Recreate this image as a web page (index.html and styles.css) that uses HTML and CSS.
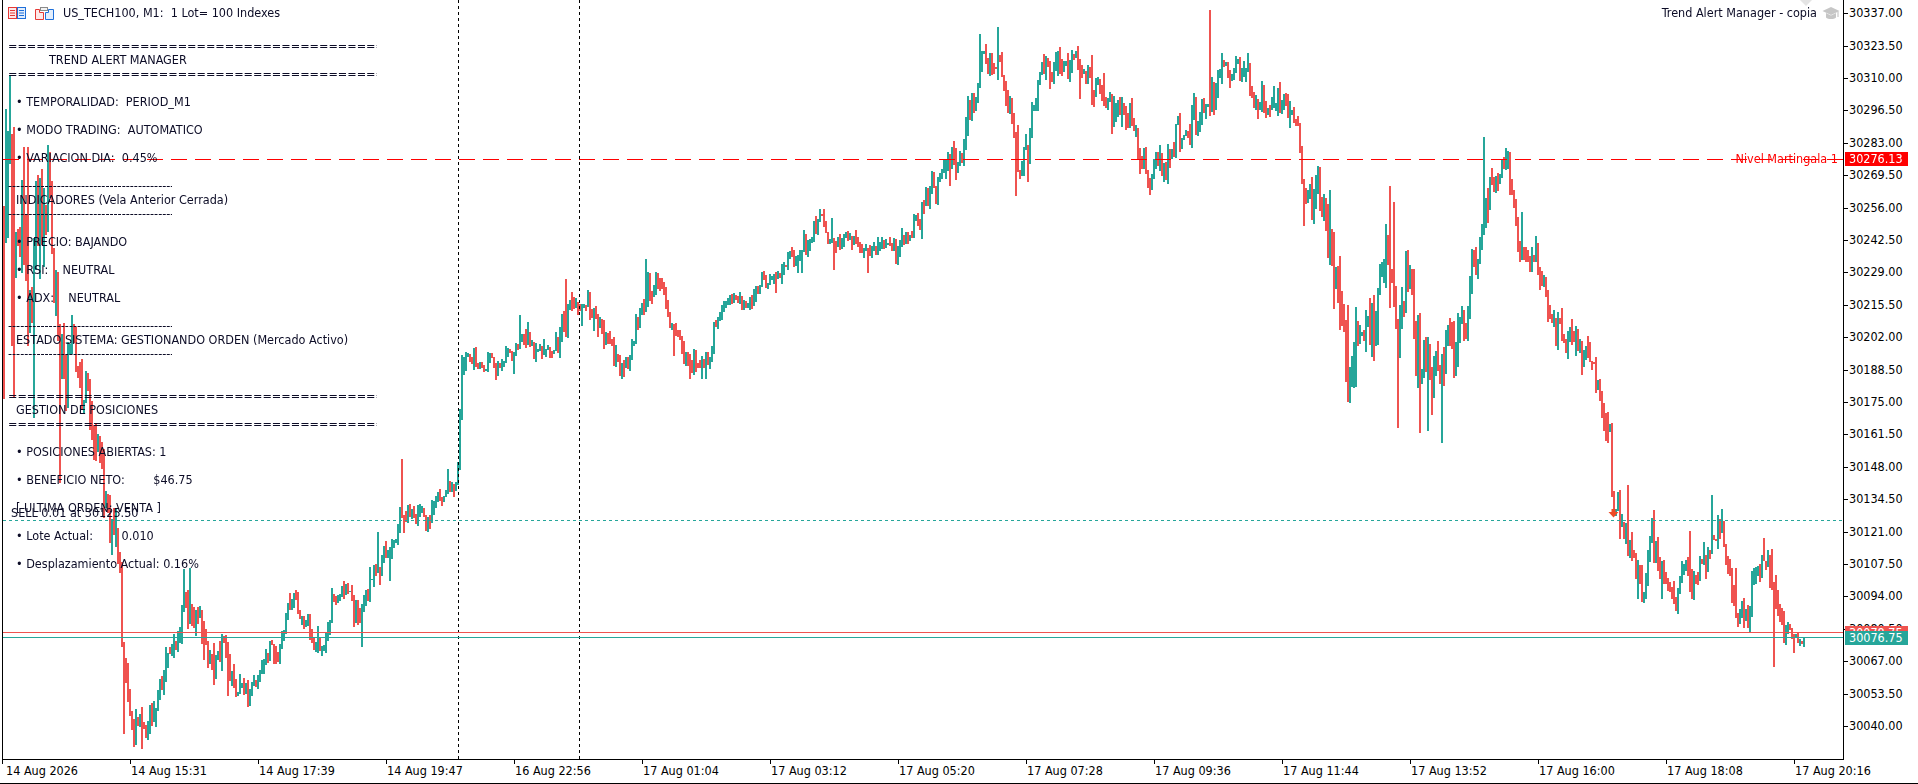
FILE: index.html
```html
<!DOCTYPE html>
<html lang="es">
<head>
<meta charset="utf-8">
<title>US_TECH100, M1</title>
<link rel="stylesheet" href="styles.css">
</head>
<body>
<div class="window">
  <div class="plot">
    <canvas id="chart" class="chart" width="1840" height="759"></canvas>

    <div class="title">
      <svg class="ico" width="18" height="12" viewBox="0 0 18 12">
        <rect x="0.5" y="0.5" width="8" height="11" fill="#fde8e8" stroke="#e53935"/>
        <rect x="9.5" y="0.5" width="8" height="11" fill="#e3eefc" stroke="#1e6fd9"/>
        <path d="M2 3.5h5M2 6h5M2 8.5h5" stroke="#e53935"/>
        <path d="M11 3.5h5M11 6h5M11 8.5h5" stroke="#1e6fd9"/>
      </svg>
      <svg class="ico" width="19" height="13" viewBox="0 0 19 13">
        <path d="M0.5 2.5H4.5V5.5H8.5V12.5H0.5Z" fill="#fde8e8" stroke="#e53935"/>
        <path d="M10.5 5.5H13.5V2.5H18.5V12.5H10.5Z" fill="#e3eefc" stroke="#1e6fd9"/>
        <rect x="5.5" y="0.5" width="7" height="3" fill="#f2f2f2" stroke="#8a8a8a"/>
      </svg>
      <span class="title-text">US_TECH100, M1:  1 Lot= 100 Indexes</span>
    </div>

    <svg class="tri" width="12" height="6" viewBox="0 0 12 6"><path d="M0 0H12L6 6Z" fill="#e4e4e4"/></svg>

    <div class="ea-name">
      <span>Trend Alert Manager - copia</span>
      <svg width="18" height="15" viewBox="0 0 18 15">
        <path d="M9 1L17.5 5L9 9L0.5 5Z" fill="#c6c6c6"/>
        <path d="M4 7V11.5C6 13.5 12 13.5 14 11.5V7L9 9.5Z" fill="#c6c6c6"/>
        <path d="M16 5.5V11" stroke="#c6c6c6" stroke-width="1.2"/>
      </svg>
    </div>

    <div class="panel">
      <div class="row sep-eq">============================================================</div>
      <div class="row title-row">TREND ALERT MANAGER</div>
      <div class="row sep-eq">============================================================</div>
      <div class="row txt item">• TEMPORALIDAD:  PERIOD_M1</div>
      <div class="row txt item">• MODO TRADING:  AUTOMATICO</div>
      <div class="row txt item">• VARIACION DIA:  0.45%</div>
      <div class="row sep-dash item">------------------------------------------------</div>
      <div class="row txt">INDICADORES (Vela Anterior Cerrada)</div>
      <div class="row sep-dash">------------------------------------------------</div>
      <div class="row txt item">• PRECIO: BAJANDO</div>
      <div class="row txt item">• RSI:    NEUTRAL</div>
      <div class="row txt item">• ADX:    NEUTRAL</div>
      <div class="row sep-dash item">------------------------------------------------</div>
      <div class="row txt">ESTADO SISTEMA: GESTIONANDO ORDEN (Mercado Activo)</div>
      <div class="row sep-dash">------------------------------------------------</div>
      <div class="row sep-eq gap42">============================================================</div>
      <div class="row txt">GESTION DE POSICIONES</div>
      <div class="row sep-eq">============================================================</div>
      <div class="row txt item">• POSICIONES ABIERTAS: 1</div>
      <div class="row txt item">• BENEFICIO NETO:        $46.75</div>
      <div class="row txt item">[ ULTIMA ORDEN: VENTA ]</div>
      <div class="row txt item">• Lote Actual:        0.010</div>
      <div class="row txt item">• Desplazamiento Actual: 0.16%</div>
    </div>

    <div class="sell-label">SELL 0.01 at 30125.50</div>
    <div class="mart-label">Nivel Martingala 1</div>
    <svg class="sell-arrow" width="11" height="9" viewBox="0 0 11 9">
      <path d="M3.5 0H7.5V3H10.5L5.5 8.5L0.5 3H3.5Z" fill="#ee4a26"/>
    </svg>
  </div>

  <div class="price-axis">
    <div class="plabel"><i></i>30337.00</div>
    <div class="plabel"><i></i>30323.50</div>
    <div class="plabel"><i></i>30310.00</div>
    <div class="plabel"><i></i>30296.50</div>
    <div class="plabel"><i></i>30283.00</div>
    <div class="plabel"><i></i>30269.50</div>
    <div class="plabel"><i></i>30256.00</div>
    <div class="plabel"><i></i>30242.50</div>
    <div class="plabel"><i></i>30229.00</div>
    <div class="plabel"><i></i>30215.50</div>
    <div class="plabel"><i></i>30202.00</div>
    <div class="plabel"><i></i>30188.50</div>
    <div class="plabel"><i></i>30175.00</div>
    <div class="plabel"><i></i>30161.50</div>
    <div class="plabel"><i></i>30148.00</div>
    <div class="plabel"><i></i>30134.50</div>
    <div class="plabel"><i></i>30121.00</div>
    <div class="plabel"><i></i>30107.50</div>
    <div class="plabel"><i></i>30094.00</div>
    <div class="plabel"><i></i>30080.50</div>
    <div class="plabel"><i></i>30067.00</div>
    <div class="plabel"><i></i>30053.50</div>
    <div class="plabel"><i></i>30040.00</div>

    <div class="pbox pbox-mart">30276.13</div>
    <div class="pbox pbox-ask">30078.75</div>
    <div class="pbox pbox-bid">30076.75</div>
  </div>

  <div class="time-axis">
    <div class="tcell first"><i></i><span>14 Aug 2026</span></div>
    <div class="tcell"><i></i><span>14 Aug 15:31</span></div>
    <div class="tcell"><i></i><span>14 Aug 17:39</span></div>
    <div class="tcell"><i></i><span>14 Aug 19:47</span></div>
    <div class="tcell"><i></i><span>16 Aug 22:56</span></div>
    <div class="tcell"><i></i><span>17 Aug 01:04</span></div>
    <div class="tcell"><i></i><span>17 Aug 03:12</span></div>
    <div class="tcell"><i></i><span>17 Aug 05:20</span></div>
    <div class="tcell"><i></i><span>17 Aug 07:28</span></div>
    <div class="tcell"><i></i><span>17 Aug 09:36</span></div>
    <div class="tcell"><i></i><span>17 Aug 11:44</span></div>
    <div class="tcell"><i></i><span>17 Aug 13:52</span></div>
    <div class="tcell"><i></i><span>17 Aug 16:00</span></div>
    <div class="tcell"><i></i><span>17 Aug 18:08</span></div>
    <div class="tcell"><i></i><span>17 Aug 20:16</span></div>
  </div>
</div>
<script src="chart.js"></script>
</body>
</html>
```

FILE: styles.css
```css
* { box-sizing: border-box; }
html, body { margin: 0; padding: 0; background: #fff; }
body {
  width: 1918px;
  height: 784px;
  overflow: hidden;
  font-family: "DejaVu Sans Condensed", "Noto Sans", sans-serif;
  font-size: 12.5px;
  color: #0c0c26;
}

.window {
  display: grid;
  grid-template-columns: 1842px 74px;
  grid-template-rows: 760px 22px;
  width: 1918px;
  height: 784px;
  padding-left: 2px;
  padding-bottom: 1px;
  border-bottom: 1px solid #000;
}

.plot {
  position: relative;
  box-sizing: content-box;
  width: 1840px;
  height: 759px;
  border-left: 1px solid #000;
  border-right: 1px solid #000;
  border-bottom: 1px solid #000;
  overflow: hidden;
}
.chart { display: block; width: 1840px; height: 759px; }

.title {
  position: absolute;
  top: 6px;
  left: 5px;
  display: flex;
  align-items: center;
  gap: 9px;
  height: 14px;
  line-height: 14px;
}
.ico { display: block; }
.title-text { white-space: pre; }

.tri { position: absolute; top: 0; left: 1797px; }

.ea-name {
  position: absolute;
  top: 6px;
  right: 3px;
  display: flex;
  align-items: center;
  gap: 5px;
  height: 14px;
  line-height: 14px;
}
.ea-name svg { display: block; margin-top: 1px; }

.panel {
  position: absolute;
  top: 39px;
  left: 5px;
  display: flex;
  flex-direction: column;
}
.row {
  height: 14px;
  line-height: 14px;
  white-space: pre;
  overflow: hidden;
}
.item { margin-top: 14px; }
.gap42 { margin-top: 28px; }
.sep-eq { width: 369px; }
.sep-dash { width: 164px; }
.txt { padding-left: 8px; }
.title-row { padding-left: 41px; }

.sell-label {
  position: absolute;
  top: 506px;
  left: 8px;
  line-height: 14px;
  white-space: pre;
}
.mart-label {
  position: absolute;
  top: 152px;
  right: 5px;
  line-height: 14px;
  color: #ff0000;
}
.sell-arrow { position: absolute; left: 1605px; top: 509px; }

.price-axis {
  position: relative;
  display: flex;
  flex-direction: column;
  padding-top: 6.3px;
  color: #000;
}
.plabel {
  display: flex;
  align-items: flex-start;
  height: 32.4px;
  flex: none;
  line-height: 14px;
}
.plabel i {
  display: block;
  width: 4px;
  height: 1px;
  margin-top: 7px;
  margin-right: 1px;
  background: #000;
}
.pbox {
  position: absolute;
  left: 1px;
  width: 63px;
  height: 14px;
  line-height: 14px;
  padding-left: 4px;
  color: #fff;
}
.pbox-mart { top: 152px; background: #ff0000; }
.pbox-ask { top: 626px; background: #ef5350; }
.pbox-bid { top: 631px; background: #26a69a; }

.time-axis {
  grid-column: 1 / 3;
  display: flex;
  overflow: hidden;
  color: #000;
}
.tcell {
  flex: none;
  width: 128px;
  display: flex;
  flex-direction: column;
}
.tcell i {
  display: block;
  width: 1px;
  height: 4px;
  background: #000;
}
.tcell span {
  line-height: 14px;
  white-space: pre;
  padding-left: 1px;
}
.tcell.first span { padding-left: 4px; }
```

FILE: chart.js
```js
(function () {
  var S = 1918 / 1568;
  var K = [
    [0,220,45],[6,150,45],[12,260,45],[18,170,45],[25,140,40],[32,230,40],[40,170,35],[47,260,30],
    [54,330,28],[62,340,22],[70,370,20],[78,360,20],[86,410,20],[94,440,20],[99,530,16],[106,585,14],
    [114,600,12],[122,575,12],[130,545,12],[140,530,12],[150,495,14],[158,535,12],[172,548,12],[188,556,12],
    [202,562,11],[214,560,11],[224,522,10],[236,505,10],[248,520,10],[258,535,10],[270,505,10],[284,500,10],
    [298,482,10],[310,458,10],[320,440,10],[327,392,12],[334,402,10],[345,415,10],[356,405,9],[366,396,9],
    [374,388,7],[377,296,6],[392,294,6],[408,298,6],[420,276,6],[436,285,6],[452,280,7],[462,242,12],
    [472,246,10],[482,258,10],[492,290,9],[502,300,8],[515,290,8],[522,252,10],[529,222,10],[536,232,10],
    [546,270,10],[556,290,8],[570,300,8],[580,286,8],[590,256,7],[602,246,7],[616,236,7],[630,226,7],
    [646,214,7],[662,196,7],[680,186,7],[692,200,7],[706,206,7],[720,210,7],[735,206,8],[746,186,10],
    [756,160,10],[766,138,10],[776,106,10],[786,122,10],[795,76,10],[802,46,10],[810,52,10],[818,42,10],
    [825,92,12],[831,150,12],[840,110,12],[848,52,10],[862,56,10],[876,52,10],[890,72,10],[904,96,10],
    [918,96,10],[930,124,10],[944,134,10],[958,116,10],[972,112,10],[984,78,14],[994,70,10],[1004,66,10],
    [1014,60,10],[1024,86,10],[1038,90,10],[1050,76,10],[1058,110,10],[1065,150,12],[1072,135,12],[1080,162,14],
    [1090,232,20],[1100,290,22],[1110,266,22],[1120,270,22],[1130,242,24],[1140,300,30],[1150,272,26],
    [1160,286,26],[1170,300,24],[1178,318,22],[1186,280,20],[1196,266,18],[1206,232,16],[1213,152,14],
    [1220,142,12],[1230,150,12],[1238,190,12],[1248,206,12],[1258,236,12],[1268,260,12],[1280,270,12],
    [1290,286,12],[1300,302,12],[1310,350,12],[1318,412,12],[1325,440,14],[1335,470,14],[1345,456,14],
    [1355,475,14],[1362,504,12],[1372,470,12],[1382,460,12],[1392,440,12],[1400,426,12],[1410,460,12],
    [1420,490,12],[1430,476,12],[1440,466,12],[1448,500,12],[1455,520,10],[1465,522,7],[1476,521.3,3]
  ];
  /* forced extremes: [x, high y or null, low y or null] (display coords) */
  var SP = [
    [10,125,325],[22,120,null],[48,null,395],[100,null,600],[115,null,612],[150,465,null],
    [328,375,null],[462,228,null],[528,212,null],[680,178,null],[800,28,null],[815,22,null],
    [830,null,160],[988,8,null],[1065,null,185],[1100,null,312],[1135,152,null],[1142,null,350],
    [1166,null,352],[1178,null,362],[1213,112,null],[1320,null,420],[1338,null,490],
    [1398,405,null],[1442,440,null],[1450,null,545]
  ];
  var P = K.map(function (k) { return [k[0] * S, k[1] * S, k[2] * S]; });
  var SPX = {};
  SP.forEach(function (s) {
    var bx = Math.round((s[0] * S - 3) / 2) * 2 + 3;
    SPX[bx] = [s[1] === null ? null : s[1] * S, s[2] === null ? null : s[2] * S];
  });

  var seed = 424242;
  function rnd() {
    seed |= 0; seed = seed + 0x6D2B79F5 | 0;
    var t = Math.imul(seed ^ seed >>> 15, 1 | seed);
    t = t + Math.imul(t ^ t >>> 7, 61 | t) ^ t;
    return ((t ^ t >>> 14) >>> 0) / 4294967296;
  }
  function gauss() {
    var u = rnd() || 1e-9, v = rnd();
    return Math.sqrt(-2 * Math.log(u)) * Math.cos(2 * Math.PI * v);
  }
  function at(x) {
    if (x <= P[0][0]) return [P[0][1], P[0][2]];
    for (var i = 1; i < P.length; i++) {
      if (x <= P[i][0]) {
        var a = P[i - 1], b = P[i], f = (x - a[0]) / (b[0] - a[0]);
        return [a[1] + (b[1] - a[1]) * f, a[2] + (b[2] - a[2]) * f];
      }
    }
    var l = P[P.length - 1];
    return [l[1], l[2]];
  }

  var cv = document.getElementById('chart');
  var ctx = cv.getContext('2d');
  var OX = 3;
  var UP = '#26a69a', DN = '#ef5350';
  var x0 = 3, x1 = 1803;
  var p = at(x0)[0];
  for (var x = x0; x <= x1; x += 2) {
    var a = at(x + 1), t = a[0], v = a[1];
    var o = p;
    var k = Math.abs(t - o) > 3 * v + 20 ? 0.8 : 0.3;
    var c = o + (t - o) * k + gauss() * v * 0.7;
    if (x >= x1 - 1) c = 637.6;
    var hi = Math.min(o, c) - Math.abs(gauss()) * v * 0.45;
    var lo = Math.max(o, c) + Math.abs(gauss()) * v * 0.45;
    if (rnd() < 0.07) {
      if (rnd() < 0.5) hi -= rnd() * v * 2.5; else lo += rnd() * v * 2.5;
    }
    var f = SPX[x];
    if (f) {
      if (f[0] !== null) hi = Math.min(hi, f[0]);
      if (f[1] !== null) lo = Math.max(lo, f[1]);
    }
    ctx.fillStyle = c < o ? UP : DN;
    var top = Math.round(hi), h = Math.max(1, Math.round(lo) - top);
    ctx.fillRect(x - OX, top, 2, h);
    p = c;
  }

  function hline(y, color, dash) {
    ctx.save();
    ctx.strokeStyle = color;
    ctx.lineWidth = 1;
    ctx.setLineDash(dash);
    ctx.beginPath();
    ctx.moveTo(0, y + 0.5);
    ctx.lineTo(1840, y + 0.5);
    ctx.stroke();
    ctx.restore();
  }
  function vline(x, color, dash) {
    ctx.save();
    ctx.strokeStyle = color;
    ctx.lineWidth = 1;
    ctx.setLineDash(dash);
    ctx.beginPath();
    ctx.moveTo(x - OX + 0.5, 0);
    ctx.lineTo(x - OX + 0.5, 759);
    ctx.stroke();
    ctx.restore();
  }

  vline(458, '#000', [3, 3]);
  vline(579, '#000', [3, 3]);
  hline(159, '#ff0000', [16, 8]);
  hline(520, '#26a69a', [3, 3]);
  hline(632, '#ef5350', []);
  hline(637, '#26a69a', []);
})();
```
